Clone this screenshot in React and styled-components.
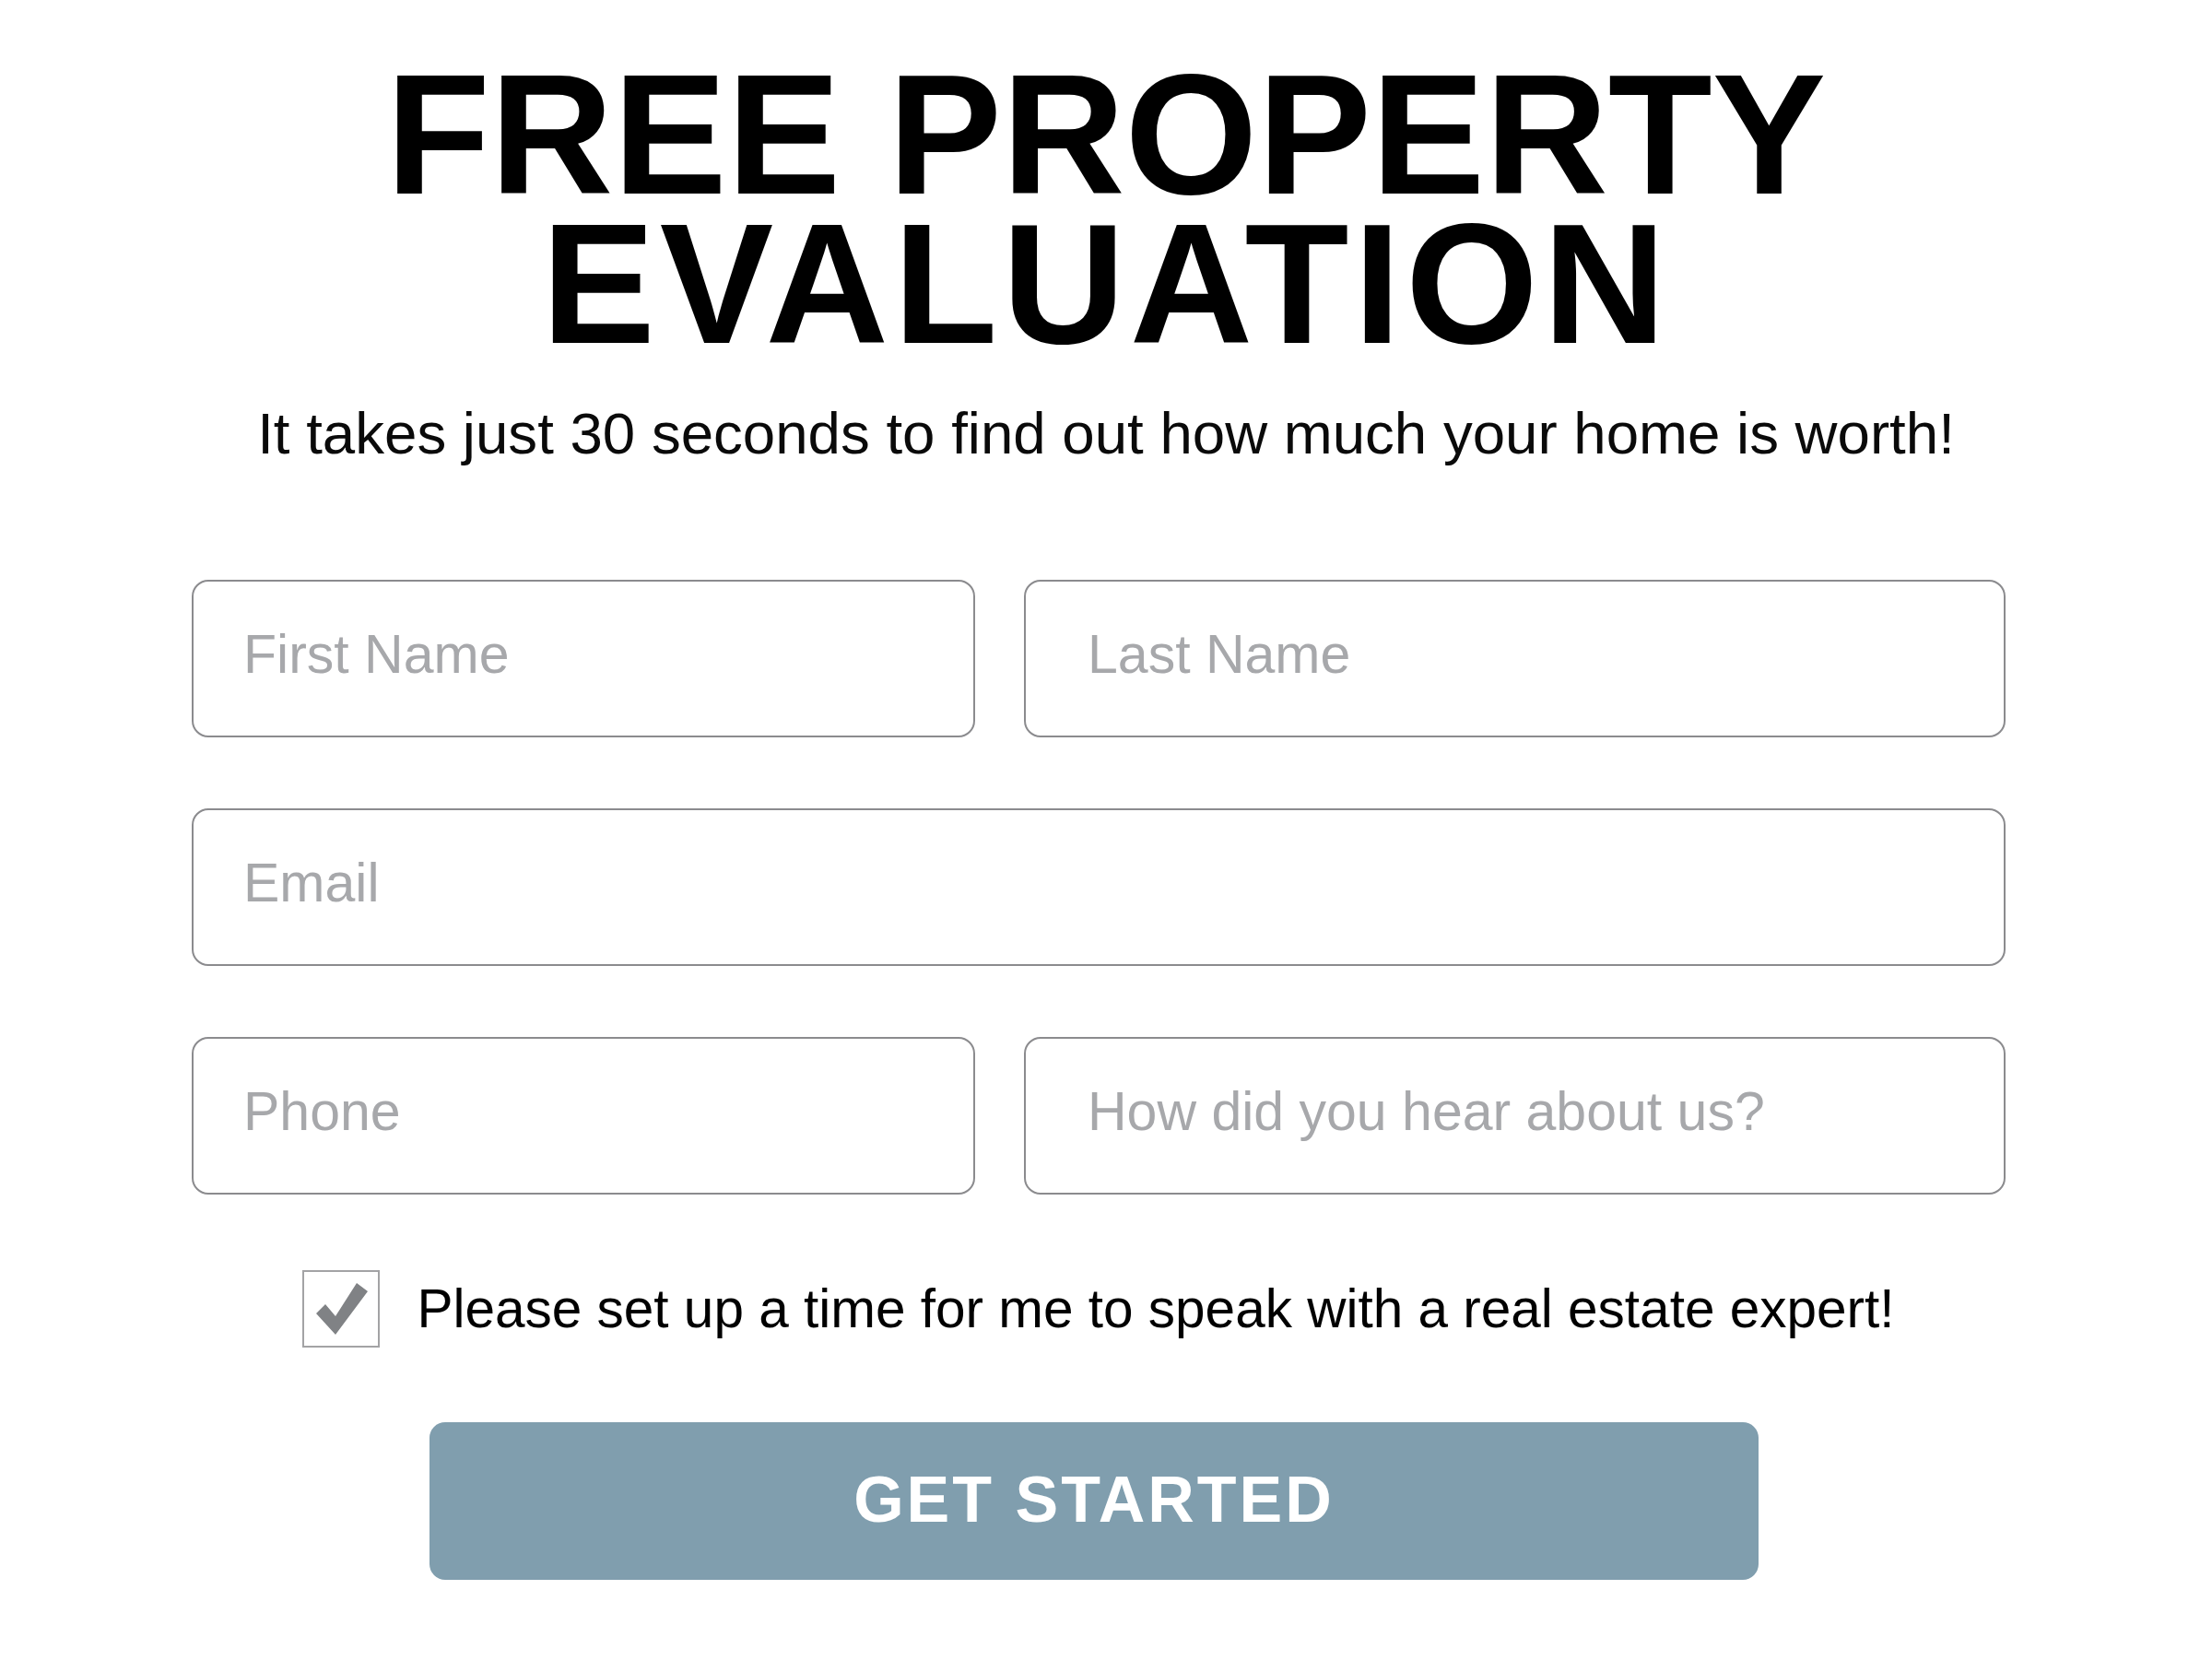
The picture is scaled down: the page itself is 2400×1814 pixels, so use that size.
import * as React from "react";
import styled, { createGlobalStyle } from "styled-components";

const GlobalStyle = createGlobalStyle`
  body {
    margin: 0;
    background: #ffffff;
    font-family: "Liberation Sans", Arial, sans-serif;
    color: #000000;
  }
`;

const Page = styled.div`
  padding-top: 65px;
  padding-bottom: 100px;
`;

const Title = styled.h1`
  margin: 0;
  text-align: center;
  font-size: 185px;
  line-height: 162px;
  font-weight: 700;
  letter-spacing: 0.5px;
  text-transform: uppercase;
`;

const TitleLine = styled.span`
  display: block;
  letter-spacing: ${(p) => p.$track || 0}px;
`;

const Lead = styled.p`
  margin: 46px 0 0;
  text-align: center;
  font-size: 63.6px;
  line-height: 1.1;
  color: #0a0a0a;
`;

const Form = styled.form`
  width: 1968px;
  margin: 124px 0 0 208px;
  display: grid;
  grid-template-columns: 850px 1065px;
  column-gap: 53px;
  row-gap: 77px;
`;

const Field = styled.input`
  grid-column: ${(p) => (p.$wide ? "1 / -1" : "auto")};
  box-sizing: border-box;
  width: 100%;
  height: 171px;
  margin: 0;
  padding: 0 20px 8px ${(p) => p.$inset}px;
  border: 2px solid #8b8b8e;
  border-radius: 18px;
  background: #ffffff;
  font-family: "Liberation Sans", Arial, sans-serif;
  font-size: 59px;
  color: #222;
  outline: none;

  &::placeholder {
    color: #a7a8ab;
    opacity: 1;
  }
`;

const CheckRow = styled.label`
  grid-column: 1 / -1;
  margin-top: 5px;
  display: flex;
  align-items: center;
  justify-content: center;
  gap: 40px;
  font-size: 58.5px;
  cursor: pointer;
`;

const Box = styled.span`
  box-sizing: border-box;
  width: 84px;
  height: 84px;
  flex: none;
  border: 2px solid #a3a3a5;
  background: #ffffff;
  display: flex;

  svg {
    width: 100%;
    height: 100%;
  }
`;

const Submit = styled.button`
  grid-column: 1 / -1;
  justify-self: center;
  width: 1442px;
  height: 171px;
  margin-top: 4px;
  margin-right: 10px;
  border: 0;
  border-radius: 17px;
  background: #809eae;
  color: #ffffff;
  font-family: "Liberation Sans", Arial, sans-serif;
  font-size: 70px;
  font-weight: 700;
  letter-spacing: 3px;
  padding-bottom: 4px;
  cursor: pointer;
`;

const Tick = () => (
  <svg viewBox="0 0 80 80" aria-hidden="true">
    <polygon points="13,45 23,35 34,48 57,12 69,21 34,68" fill="#808285" />
  </svg>
);

export default function App() {
  return (
    <Page>
      <GlobalStyle />
      <Title>
        <TitleLine>Free Property</TitleLine>
        <TitleLine $track={5}>Evaluation</TitleLine>
      </Title>
      <Lead>It takes just 30 seconds to find out how much your home is worth!</Lead>
      <Form onSubmit={(e) => e.preventDefault()}>
        <Field $inset={54} placeholder="First Name" />
        <Field $inset={67} placeholder="Last Name" />
        <Field $wide $inset={54} placeholder="Email" />
        <Field $inset={54} placeholder="Phone" />
        <Field $inset={67} placeholder="How did you hear about us?" />
        <CheckRow>
          <Box>
            <Tick />
          </Box>
          Please set up a time for me to speak with a real estate expert!
        </CheckRow>
        <Submit type="submit">GET STARTED</Submit>
      </Form>
    </Page>
  );
}
